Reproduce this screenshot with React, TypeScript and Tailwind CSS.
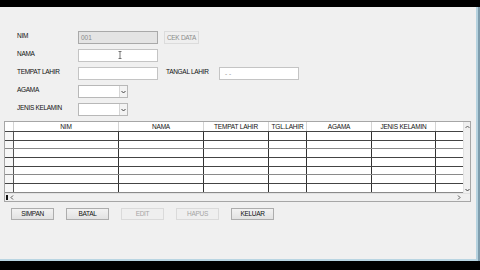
import React from "react";

const cols = [
  { w: "w-[9px]", label: "" },
  { w: "w-[105px]", label: "NIM" },
  { w: "w-[85px]", label: "NAMA" },
  { w: "w-[65px]", label: "TEMPAT LAHIR" },
  { w: "w-[38px]", label: "TGL.LAHIR" },
  { w: "w-[65px]", label: "AGAMA" },
  { w: "w-[64px]", label: "JENIS KELAMIN" },
];

const rows = [
  { h: "h-[9px]", c: "border-[#444]" },
  { h: "h-[8px]", c: "border-[#8a8a8a]" },
  { h: "h-[9px]", c: "border-[#444]" },
  { h: "h-[9px]", c: "border-[#444]" },
  { h: "h-[8px]", c: "border-[#8a8a8a]" },
  { h: "h-[9px]", c: "border-[#444]" },
  { h: "h-[9px]", c: "border-[#8a8a8a]" },
];

function ChevDown() {
  return (
    <svg width="5" height="4" viewBox="0 0 5 4">
      <path d="M0.5 1 L2.5 3 L4.5 1" fill="none" stroke="#444" strokeWidth="1" />
    </svg>
  );
}
function ChevUp() {
  return (
    <svg width="5" height="4" viewBox="0 0 5 4">
      <path d="M0.5 3 L2.5 1 L4.5 3" fill="none" stroke="#555" strokeWidth="0.9" />
    </svg>
  );
}
function ChevLeft() {
  return (
    <svg width="4" height="5" viewBox="0 0 4 5">
      <path d="M3 0.5 L1 2.5 L3 4.5" fill="none" stroke="#444" strokeWidth="0.9" />
    </svg>
  );
}
function ChevRight() {
  return (
    <svg width="4" height="5" viewBox="0 0 4 5">
      <path d="M1 0.5 L3 2.5 L1 4.5" fill="none" stroke="#444" strokeWidth="0.9" />
    </svg>
  );
}

function Label({ children, w }: { children: React.ReactNode; w: string }) {
  return (
    <div className={`${w} shrink-0 h-full text-[6.5px] tracking-[-0.3px] leading-[8px] text-[#111] pt-[1px] whitespace-nowrap`}>
      {children}
    </div>
  );
}

function Combo() {
  return (
    <div className="w-[50px] h-full border border-[#b8b8b8] bg-white flex justify-end">
      <div className="w-[8px] h-full border-l border-[#d6d6d6] bg-[#f3f3f3] flex items-center justify-center">
        <ChevDown />
      </div>
    </div>
  );
}

function Btn({ children, disabled }: { children: React.ReactNode; disabled?: boolean }) {
  return (
    <div
      className={
        disabled
          ? "w-[43px] h-[12px] border border-[#dadada] bg-[#efefef] text-[#a5a5a5] text-[6.5px] tracking-[-0.3px] leading-[10px] flex items-center justify-center"
          : "w-[43px] h-[12px] border border-[#adadad] bg-gradient-to-b from-[#f2f2f2] to-[#e2e2e2] text-[#111] text-[6.5px] tracking-[-0.3px] leading-[10px] flex items-center justify-center"
      }
    >
      {children}
    </div>
  );
}

export default function App() {
  return (
    <div className="w-[480px] h-[270px] bg-black flex flex-col overflow-hidden font-['Liberation_Sans',Arial,sans-serif]">
      <div className="h-[7px] shrink-0" />
      <div className="flex h-[254px] shrink-0">
        <div className="flex-1 bg-[#f0f0f0] border-b-2 border-[#b9d5e2] flex flex-col">
          {/* Form */}
          <div className="pt-[24px] pl-[17px] flex flex-col gap-[5px]">
            <div className="flex h-[13px]">
              <Label w="w-[61px]">NIM</Label>
              <div className="w-[80px] h-full border border-[#a9a9a9] bg-[#e4e4e4] text-[6.5px] leading-[11px] text-[#8a8a8a] pl-[2px]">001</div>
              <div className="ml-[6px] w-[35px] h-full border border-[#dcdcdc] bg-[#efefef] text-[6.5px] tracking-[-0.3px] leading-[11px] text-[#8c8c8c] flex items-center justify-center">CEK DATA</div>
            </div>
            <div className="flex h-[13px]">
              <Label w="w-[61px]">NAMA</Label>
              <div className="relative w-[80px] h-full border border-[#c4c4c4] bg-white">
                <svg className="absolute left-[39px] top-[1px]" width="4" height="8" viewBox="0 0 4 8">
                  <path d="M0.5 0.5 H3.5 M2 0.5 V7.5 M0.5 7.5 H3.5" fill="none" stroke="#555" strokeWidth="0.8" />
                </svg>
              </div>
            </div>
            <div className="flex h-[13px]">
              <Label w="w-[61px]">TEMPAT LAHIR</Label>
              <div className="w-[80px] h-full border border-[#c4c4c4] bg-white" />
              <div className="ml-[8px]">
                <Label w="w-[53px]">TANGAL LAHIR</Label>
              </div>
              <div className="w-[80px] h-full border border-[#c4c4c4] bg-white text-[6.5px] leading-[11px] text-[#9a9a9a] pl-[5px]">- -</div>
            </div>
            <div className="flex h-[13px]">
              <Label w="w-[61px]">AGAMA</Label>
              <Combo />
            </div>
            <div className="flex h-[13px]">
              <Label w="w-[61px]">JENIS KELAMIN</Label>
              <Combo />
            </div>
          </div>

          {/* Table */}
          <div className="mt-[5px] ml-[4px] w-[467px] h-[81px] border border-[#a6a6a6] bg-white flex flex-col">
            <div className="flex h-[71px]">
              <div className="w-[458px] flex flex-col">
                <div className="flex h-[10px] border-b border-[#444] bg-white">
                  {cols.map((c, i) => (
                    <div
                      key={i}
                      className={`${c.w} h-full border-r border-[#d4d4d4] text-[6.5px] tracking-[-0.2px] leading-[9px] text-[#111] text-center whitespace-nowrap overflow-hidden`}
                    >
                      {c.label}
                    </div>
                  ))}
                  <div className="w-[27px] h-full" />
                </div>
                {rows.map((r, ri) => (
                  <div key={ri} className={`flex ${r.h} border-b ${r.c}`}>
                    {cols.map((c, ci) => (
                      <div key={ci} className={`${c.w} h-full border-r ${ci === 0 ? "border-[#555] bg-[#f7f7f7]" : "border-[#333]"}`} />
                    ))}
                    <div className="w-[27px] h-full" />
                  </div>
                ))}
              </div>
              <div className="w-[7px] h-full bg-[#f0f0f0] border-l border-[#e2e2e2] flex flex-col items-center justify-between pt-[3px] pb-[1px]">
                <ChevUp />
                <ChevDown />
              </div>
            </div>
            <div className="flex h-[8px] bg-[#f0f0f0] border-t border-[#e2e2e2]">
              <div className="w-[458px] h-full flex items-center justify-between pl-[1px] pr-[2px]">
                <div className="flex items-center gap-[2px]">
                  <div className="w-[2px] h-[5px] bg-[#111]" />
                  <ChevLeft />
                </div>
                <ChevRight />
              </div>
              <div className="w-[7px] h-full" />
            </div>
          </div>

          {/* Buttons */}
          <div className="mt-[6px] pl-[11px] flex gap-[12px]">
            <Btn>SIMPAN</Btn>
            <Btn>BATAL</Btn>
            <Btn disabled>EDIT</Btn>
            <Btn disabled>HAPUS</Btn>
            <Btn>KELUAR</Btn>
          </div>
        </div>
        <div className="w-[2px] bg-[#b5d2df]" />
        <div className="w-[2px] bg-[#7f9dad]" />
      </div>
      <div className="flex-1" />
    </div>
  );
}
